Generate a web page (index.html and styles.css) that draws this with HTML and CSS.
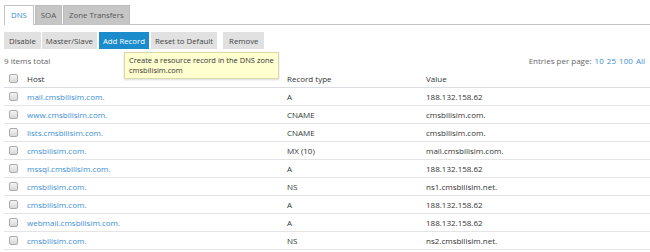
FILE: index.html
```html
<!DOCTYPE html>
<html lang="en">
<head>
  <meta charset="UTF-8" />
  <title>DNS Records</title>
  <link rel="stylesheet" href="styles.css">
</head>
<body>

  <!-- Tabs -->
  <div class="tabs">
    <div class="tab active">DNS</div>
    <div class="tab">SOA</div>
    <div class="tab">Zone Transfers</div>
  </div>

  <!-- Toolbar -->
  <div class="toolbar">
    <div class="btn-group">
      <button class="btn">Disable</button>
      <button class="btn">Master/Slave</button>
      <button class="btn primary">Add Record</button>
      <button class="btn">Reset to Default</button>
    </div>
    <button class="btn">Remove</button>
    <div class="tooltip">Create a resource record in the DNS zone<br>cmsbilisim.com</div>
  </div>

  <div class="summary">
    <span>9 items total</span>
    <span>Entries per page: <a>10</a> <a>25</a> <a>100</a> <a>All</a></span>
  </div>

  <!-- Records -->
  <div class="records">
    <div class="row head">
      <span class="check"></span><span>Host</span><span>Record type</span><span>Value</span>
    </div>
    <div class="row"><span class="check"></span><a>mail.cmsbilisim.com.</a><span>A</span><span>188.132.158.62</span></div>
    <div class="row"><span class="check"></span><a>www.cmsbilisim.com.</a><span>CNAME</span><span>cmsbilisim.com.</span></div>
    <div class="row"><span class="check"></span><a>lists.cmsbilisim.com.</a><span>CNAME</span><span>cmsbilisim.com.</span></div>
    <div class="row"><span class="check"></span><a>cmsbilisim.com.</a><span>MX (10)</span><span>mail.cmsbilisim.com.</span></div>
    <div class="row"><span class="check"></span><a>mssql.cmsbilisim.com.</a><span>A</span><span>188.132.158.62</span></div>
    <div class="row"><span class="check"></span><a>cmsbilisim.com.</a><span>NS</span><span>ns1.cmsbilisim.net.</span></div>
    <div class="row"><span class="check"></span><a>cmsbilisim.com.</a><span>A</span><span>188.132.158.62</span></div>
    <div class="row"><span class="check"></span><a>webmail.cmsbilisim.com.</a><span>A</span><span>188.132.158.62</span></div>
    <div class="row"><span class="check"></span><a>cmsbilisim.com.</a><span>NS</span><span>ns2.cmsbilisim.net.</span></div>
  </div>

</body>
</html>
```

FILE: styles.css
```css
* { margin: 0; padding: 0; box-sizing: border-box; }

body {
  font-family: "Open Sans", Arial, sans-serif;
  font-size: 8px;
  color: #333;
  background: #fff;
  padding: 5px 0 0 4px;
  overflow: hidden;
}

a { color: #3a8fd4; }

/* --- TABS --- */
.tabs {
  display: flex;
  gap: 1px;
  height: 20px;
  border-bottom: 1px solid #c4c4c4;
}

.tab {
  background: #c6c6c6;
  color: #555;
  font-size: 7.8px;
  padding: 0 5px;
  line-height: 19px;
  border: 1px solid #bbb;
  border-bottom: none;
}

.tab.active {
  background: #fff;
  color: #2f8dcf;
  border-color: #c4c4c4;
  height: 20px;
  padding: 0 6px;
}

/* --- TOOLBAR --- */
.toolbar {
  position: relative;
  display: flex;
  gap: 6px;
  margin-top: 7px;
}

.btn-group {
  display: flex;
  gap: 1px;
}

.btn {
  font-family: "Open Sans", Arial, sans-serif;
  font-size: 7.8px;
  color: #444;
  background: #e1e1e1;
  border: none;
  height: 17px;
  padding: 0 4px;
}

.btn-group .btn:first-child {
  padding: 0 5px;
}

.toolbar > .btn {
  padding: 0 6px;
}

.btn.primary {
  background: #1a8ccc;
  color: #fff;
  margin: 0 1px;
}

.tooltip {
  position: absolute;
  left: 120px;
  top: 20px;
  background: #ffffcf;
  border: 1px solid #d8d8a8;
  color: #333;
  font-size: 7.5px;
  line-height: 10px;
  padding: 2px 4px 3px;
  box-shadow: 0 1px 2px rgba(0,0,0,0.15);
}

.summary {
  display: flex;
  justify-content: space-between;
  color: #666;
  margin-top: 5px;
  padding-right: 5px;
  line-height: 14px;
}

.summary a {
  margin-left: 1px;
}

/* --- RECORDS --- */
.records {
  margin-top: 2px;
}

.row {
  display: grid;
  grid-template-columns: 23px 260px 139px 1fr;
  align-items: center;
  height: 18px;
  border-bottom: 1px solid #e4e4e4;
}

.row.head {
  height: 18px;
  color: #333;
  border-bottom: 1px solid #dadde2;
}

.check {
  width: 9px;
  height: 9px;
  margin-left: 5px;
  border: 1px solid #aaa;
  border-radius: 2px;
  background: linear-gradient(#f4f4f4, #d8d8d8);
}
```
